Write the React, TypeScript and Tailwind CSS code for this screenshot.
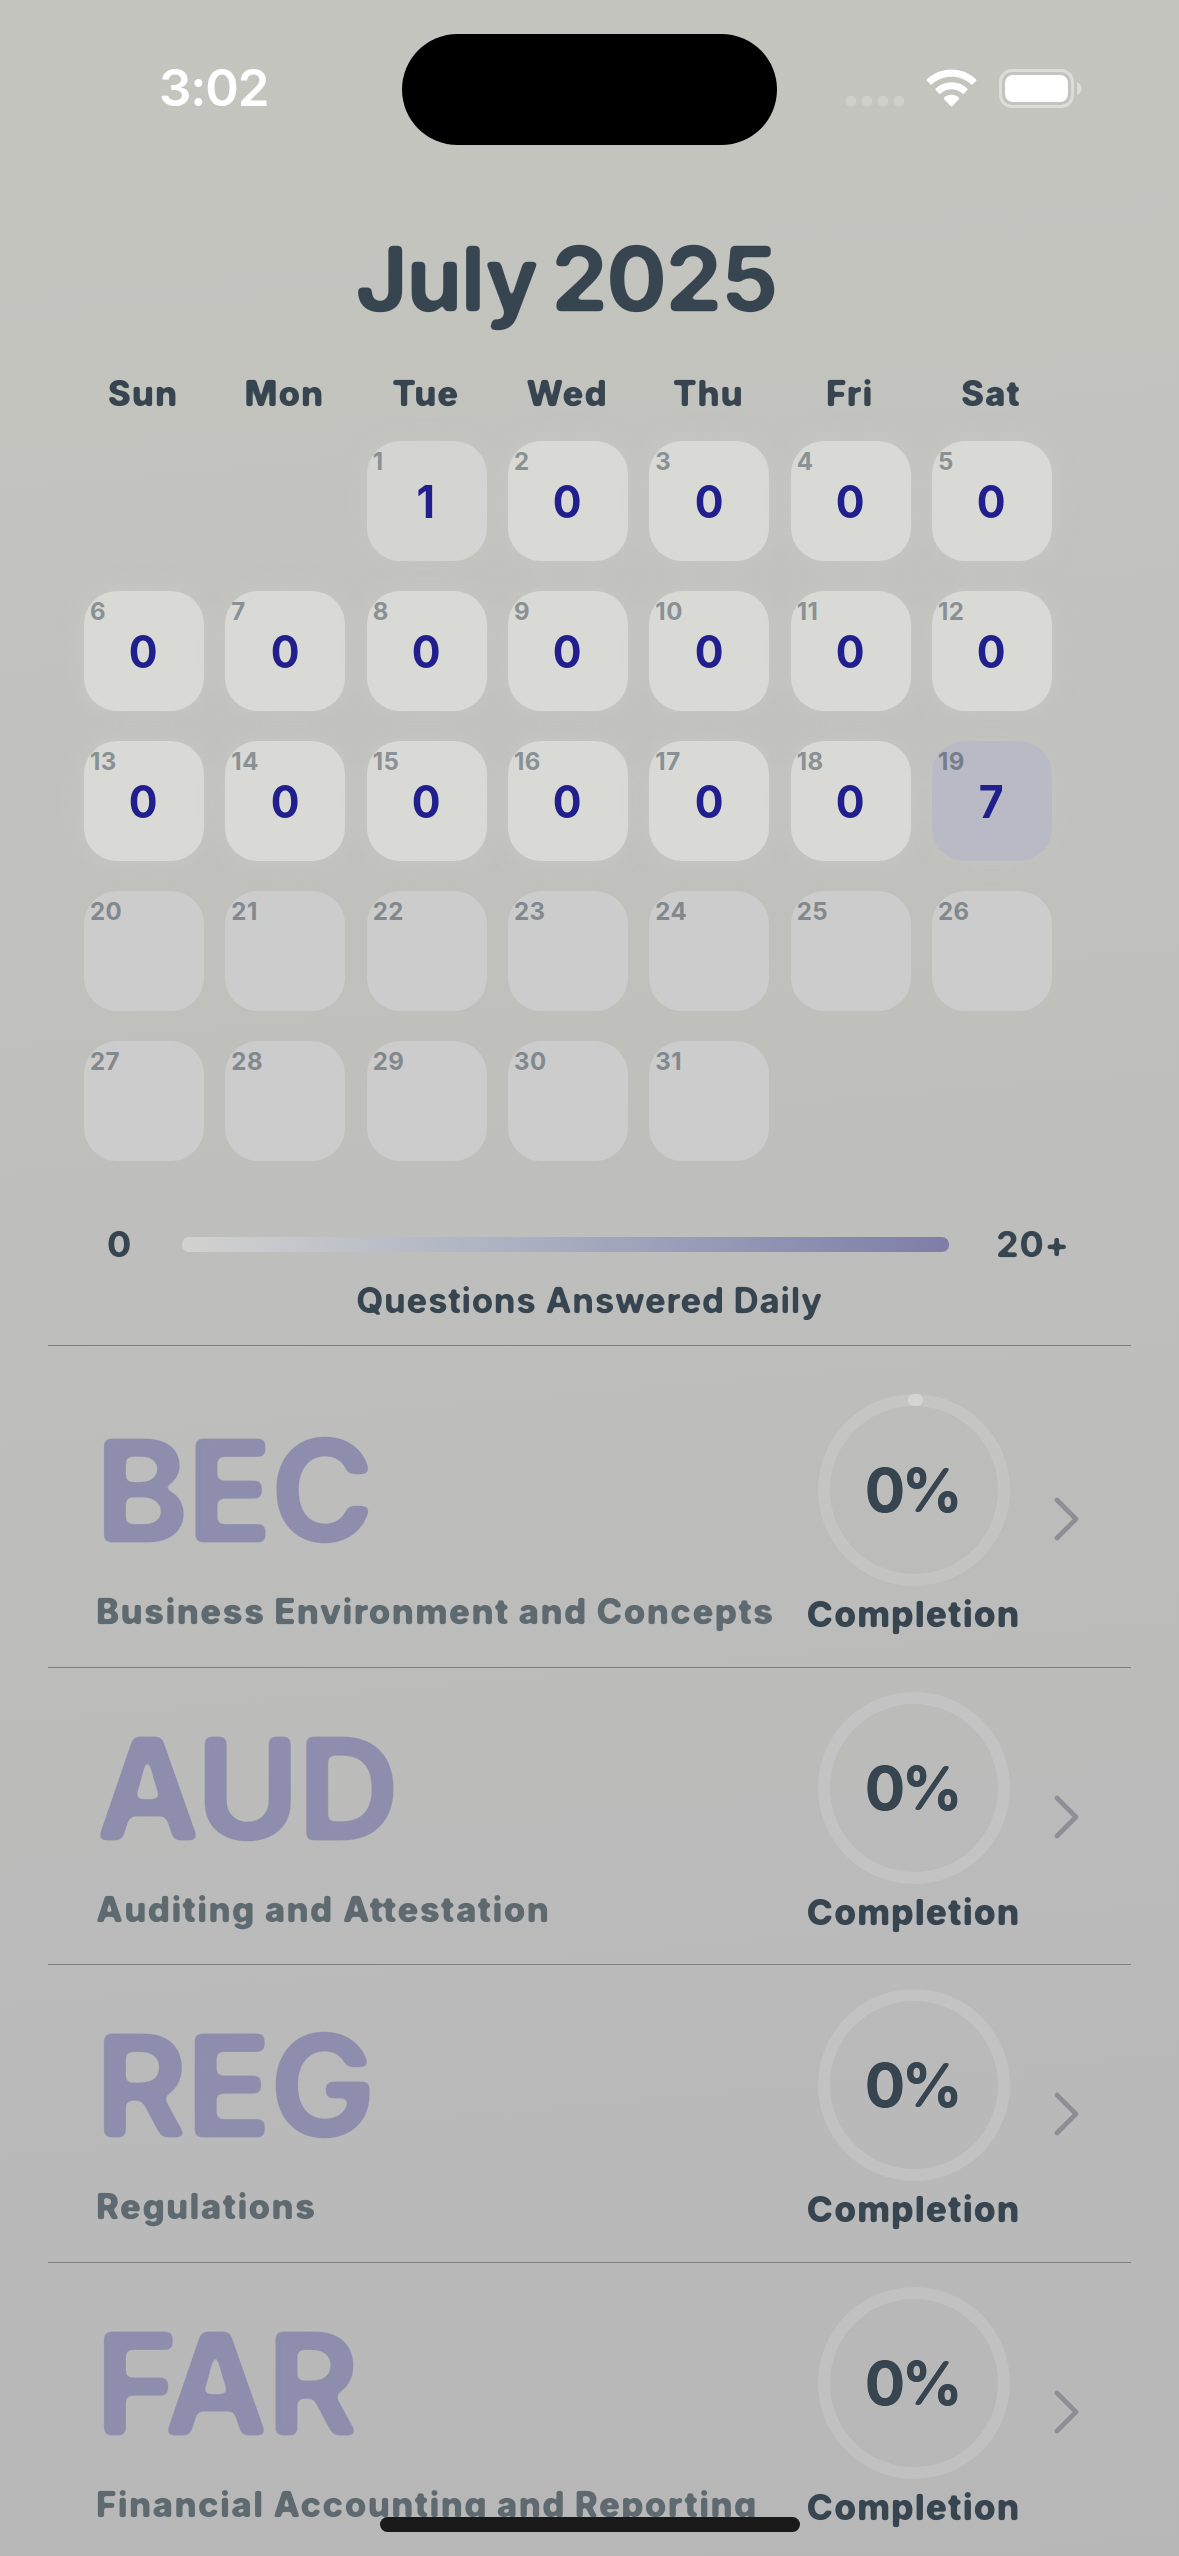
const WEEKDAYS = ["Sun", "Mon", "Tue", "Wed", "Thu", "Fri", "Sat"];

const ANSWERED: Record<number, number> = { 1: 1, 19: 7 };
const TODAY = 19;
const LEADING_BLANKS = 2;
const DAYS = Array.from({ length: 31 }, (_, i) => i + 1);

const SECTIONS = [
  { code: "BEC", name: "Business Environment and Concepts", started: true },
  { code: "AUD", name: "Auditing and Attestation", started: false },
  { code: "REG", name: "Regulations", started: false },
  { code: "FAR", name: "Financial Accounting and Reporting", started: false },
];

/* Filters that soften glyph corners so Inter reads as a rounded face. */
function RoundingFilters() {
  const sizes = [
    { id: "round-xl", blur: 3.8, slope: 8 },
    { id: "round-lg", blur: 2.3, slope: 5.5 },
    { id: "round-md", blur: 1.6, slope: 4.5 },
    { id: "round-sm", blur: 0.9, slope: 3 },
  ];
  return (
    <svg className="absolute h-0 w-0" aria-hidden="true">
      <defs>
        {sizes.map((s) => (
          <filter key={s.id} id={s.id} x="-10%" y="-10%" width="120%" height="120%" colorInterpolationFilters="sRGB">
            <feGaussianBlur in="SourceGraphic" stdDeviation={s.blur} />
            <feComponentTransfer>
              <feFuncA type="linear" slope={s.slope} intercept={0.5 - s.slope * 0.46} />
            </feComponentTransfer>
          </filter>
        ))}
      </defs>
    </svg>
  );
}

function StatusBar() {
  return (
    <header className="relative h-[224px] shrink-0">
      <div className="absolute left-[402px] top-[33.5px] h-[111px] w-[375px] rounded-full bg-black" />
      <div className="flex h-[176px] items-center justify-between pl-[159px] pr-[97px]">
        <span className="text-[51px] font-semibold leading-[60px] tracking-[-1.2px] text-white">3:02</span>
        <div className="flex items-center">
          <div className="mt-[26px] flex gap-[6px]">
            {[0, 1, 2, 3].map((i) => (
              <span key={i} className="size-[10px] rounded-[3px] bg-[#cfcfca]" />
            ))}
          </div>
          <svg className="ml-[22px] h-[38px] w-[51px]" viewBox="0 0 51 38" fill="#fff">
            <path d="M25.5 0.5C34.8 0.5 43.6 4.1 50 10.3c.5.5.5 1.2 0 1.700L46.700 15.300c-.5.5-1.200.5-1.700 0C39.700 10.400 32.800 7.800 25.500 7.800S11.300 10.400 6 15.300c-.5.5-1.200.5-1.700 0L1 12c-.5-.5-.5-1.200 0-1.700C7.400 4.100 16.200.5 25.500.5z" />
            <path d="M25.500 13.200c5.900 0 11.500 2.200 15.800 6.200.5.5.5 1.200 0 1.700l-3.300 3.400c-.5.5-1.200.5-1.700 0-2.900-2.700-6.800-4.200-10.800-4.200s-7.900 1.500-10.800 4.200c-.5.5-1.200.5-1.700 0L9.700 21.100c-.5-.5-.5-1.200 0-1.700 4.300-4 9.900-6.200 15.800-6.200z" />
            <path d="M25.500 25.800c2.700 0 5.300 1 7.300 2.700.5.500.5 1.200 0 1.700l-6.400 6.700c-.5.500-1.300.5-1.800 0l-6.400-6.700c-.5-.5-.5-1.200 0-1.700 2-1.700 4.600-2.700 7.300-2.700z" />
          </svg>
          <div className="ml-[22px] h-[39px] w-[75px] rounded-[13px] border-3 border-[#dcdcd9] p-[3px]">
            <div className="size-full rounded-[8px] bg-white" />
          </div>
          <svg className="ml-[3px] h-[13px] w-[5px]" viewBox="0 0 5 13">
            <path d="M0 0C2.700 1.100 4.500 3.500 4.500 6.500S2.700 11.900 0 13z" fill="#dcdcd9" />
          </svg>
        </div>
      </div>
    </header>
  );
}

function DayCell({ day }: { day: number }) {
  const future = day > TODAY;
  const count = ANSWERED[day] ?? 0;
  const tone = future
    ? "bg-[#cccccc]"
    : count === 0
      ? "bg-[#d9dad5] shadow-[0_0_30px_rgba(220,220,215,0.3)]"
      : count < 5
        ? "bg-[#d4d4d3] shadow-[0_0_30px_rgba(220,220,215,0.2)]"
        : "bg-[#babac7] shadow-[0_0_30px_rgba(220,220,215,0.2)]";
  return (
    <div className={`relative flex size-[120px] items-center justify-center rounded-[33px] ${tone}`}>
      <span
        className={`absolute left-[6px] top-[6px] text-[24px] font-bold leading-[29px] tracking-[0.5px] ${
          future ? "text-[#82898e]" : day === TODAY ? "text-[#777d8b]" : "text-[#899195]"
        }`}
      >
        {day}
      </span>
      {!future && <span className="mr-[1px] mt-[1px] scale-x-95 text-[45px] font-bold leading-[54px] text-[#211f8d]">{count}</span>}
    </div>
  );
}

function Calendar() {
  return (
    <section className="ml-[84px] w-[968px] text-[#374550]">
      <h1 className="-ml-[4px] text-center text-[90px] font-bold leading-[110px] tracking-[-1.5px] [word-spacing:-6px] [filter:url(#round-lg)]">
        July 2025
      </h1>
      <div className="-ml-[1px] mr-[1px] mt-[35px] grid grid-cols-[repeat(7,120px)] justify-between text-center text-[35px] font-extrabold leading-[48px] tracking-[0.9px] [filter:url(#round-sm)]">
        {WEEKDAYS.map((d) => (
          <span key={d}>{d}</span>
        ))}
      </div>
      <div className="mt-[24px] grid grid-cols-[repeat(7,120px)] justify-between gap-y-[30px]">
        {Array.from({ length: LEADING_BLANKS }, (_, i) => (
          <span key={`blank-${i}`} />
        ))}
        {DAYS.map((d) => (
          <DayCell key={d} day={d} />
        ))}
      </div>
    </section>
  );
}

function Legend() {
  return (
    <section className="mt-[59px] text-[#374550]">
      <div className="flex h-[48px] items-center pl-[107px] text-[36px] font-bold leading-[48px] tracking-[0.8px]">
        <span className="w-[75px] [filter:url(#round-sm)]">0</span>
        <div className="h-[15px] w-[767px] rounded-[7px] bg-linear-to-r from-[#d2d2d0] via-[#a6abbf] to-[#7f7da8]" />
        <span className="ml-[47px] [filter:url(#round-sm)]">20+</span>
      </div>
      <p className="mt-[8px] text-center text-[35px] font-bold leading-[48px] tracking-[0.65px] [filter:url(#round-sm)]">
        Questions Answered Daily
      </p>
    </section>
  );
}

function ProgressRing({ started }: { started: boolean }) {
  return (
    <div className="relative flex size-[192px] items-center justify-center">
      <svg className="absolute inset-0 size-full" viewBox="0 0 192 192" fill="none">
        <circle cx="96" cy="96" r="90" stroke="#fff" strokeOpacity="0.13" strokeWidth="12" />
        {started && <path d="M96 6h3" stroke="#d4d4d3" strokeWidth="12" strokeLinecap="round" />}
      </svg>
      <span className="mr-[3px] text-[60px] font-bold leading-[72px] tracking-[-3.5px] [filter:url(#round-md)]">0%</span>
    </div>
  );
}

function SectionRow({ code, name, started }: { code: string; name: string; started: boolean }) {
  return (
    <li className="flex h-[297.67px] shrink-0 border-b border-[#7f7f7f]">
      <div className="ml-[47px] w-[712px] pt-[49px]">
        <h2 className="text-[142px] font-bold leading-[142px] tracking-[-2.5px] text-[#8e8dad] [filter:url(#round-xl)]">{code}</h2>
        <p className="ml-[1px] mt-[26px] whitespace-nowrap text-[35px] font-extrabold leading-[48px] tracking-[1.3px] text-[#5e6a70] [filter:url(#round-sm)]">
          {name}
        </p>
      </div>
      <div className="flex w-[213px] flex-col items-center pt-[24px] text-[#374550]">
        <div>
          <ProgressRing started={started} />
        </div>
        <p className="mt-[5px] text-[35.5px] font-extrabold leading-[48px] tracking-[1px] [filter:url(#round-sm)]">Completion</p>
      </div>
      <svg className="ml-[34px] mt-[127px] h-[44px] w-[26px]" viewBox="0 0 26 44" fill="none">
        <path d="M3 3l19 19L3 41" stroke="#8f8e94" strokeWidth="4.6" strokeLinecap="round" strokeLinejoin="round" />
      </svg>
    </li>
  );
}

export default function App() {
  return (
    <div className="relative flex h-[2556px] w-[1179px] flex-col overflow-hidden bg-[linear-gradient(175deg,#c5c5c0_0%,#c4c4bf_10%,#bebebc_48%,#bababa_76%,#b7b7b7_100%)] font-['Inter',sans-serif]">
      <RoundingFilters />
      <StatusBar />
      <Calendar />
      <Legend />
      <ul className="mx-[48px] mt-[21px] border-t border-[#7f7f7f] pt-[24px]">
        {SECTIONS.map((s) => (
          <SectionRow key={s.code} {...s} />
        ))}
      </ul>
      <div className="absolute bottom-[24px] left-[380px] h-[15px] w-[420px] rounded-full bg-[#1a1a1a]" />
    </div>
  );
}
